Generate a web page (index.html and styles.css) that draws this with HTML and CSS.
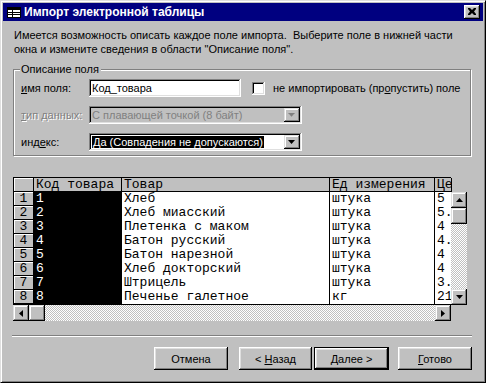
FILE: index.html
```html
<!DOCTYPE html>
<html lang="ru">
<head>
<meta charset="utf-8">
<title>Импорт электронной таблицы</title>
<link rel="stylesheet" href="styles.css">
</head>
<body>
<div class="window">
  <div class="titlebar">
    <svg class="ticon" width="14" height="11" viewBox="0 0 14 11">
      <rect x="0.5" y="0.5" width="13" height="10" fill="#fff" stroke="#000"/>
      <rect x="1" y="1" width="12" height="2" fill="#000"/>
      <line x1="5.5" y1="1" x2="5.5" y2="10" stroke="#000"/>
      <line x1="1" y1="5.5" x2="13" y2="5.5" stroke="#000"/>
      <line x1="1" y1="7.5" x2="13" y2="7.5" stroke="#000"/>
    </svg>
    <span class="ttext">Импорт электронной таблицы</span>
    <div class="close"><svg width="8" height="7" viewBox="0 0 8 7"><path d="M0 0h2l2 2 2-2h2v1l-2 2.5 2 2.5v1h-2l-2-2-2 2h-2v-1l2-2.5-2-2.5z" fill="#000"/></svg></div>
  </div>
  <div class="content">
    <p class="intro">Имеется возможность описать каждое поле импорта.&nbsp; Выберите поле в нижней части<br>окна и измените сведения в области "Описание поля".</p>
    <div class="group">
      <span class="legend">Описание поля</span>
      <div class="frow r1">
        <span class="lbl"><u>и</u>мя поля:</span>
        <div class="edit">Код_товара</div>
        <div class="check"></div>
        <span class="clbl">не импортировать (пр<u>о</u>пустить) поле</span>
      </div>
      <div class="frow r2">
        <span class="lbl dis"><u>т</u>ип данных:</span>
        <div class="combo disabled"><span class="ctext">С плавающей точкой (8 байт)</span><div class="cbtn"><svg width="7" height="5" viewBox="0 0 7 5"><path d="M1 1h5l-2.5 3z" fill="#fff"/><path d="M0 0h7l-3.5 4z" fill="#808080"/></svg></div></div>
      </div>
      <div class="frow r3">
        <span class="lbl">инд<u>е</u>кс:</span>
        <div class="combo"><span class="ctext"><span class="sel">Да (Совпадения не допускаются)</span></span><div class="cbtn"><svg width="7" height="4" viewBox="0 0 7 4"><path d="M0 0h7l-3.5 4z" fill="#000"/></svg></div></div>
      </div>
    </div>

    <div class="grid">
      <div class="gtable">
        <div class="c hd rh"></div><div class="c hd">Код товара</div><div class="c hd">Товар</div><div class="c hd">Ед измерения</div><div class="c hd">Це</div>

        <div class="c rh">1</div><div class="c k">1</div><div class="c">Хлеб</div><div class="c">штука</div><div class="c">5</div>
        <div class="c rh">2</div><div class="c k">2</div><div class="c">Хлеб миасский</div><div class="c">штука</div><div class="c">5.</div>
        <div class="c rh">3</div><div class="c k">3</div><div class="c">Плетенка с маком</div><div class="c">штука</div><div class="c">4</div>
        <div class="c rh">4</div><div class="c k">4</div><div class="c">Батон русский</div><div class="c">штука</div><div class="c">4.</div>
        <div class="c rh">5</div><div class="c k">5</div><div class="c">Батон нарезной</div><div class="c">штука</div><div class="c">4</div>
        <div class="c rh">6</div><div class="c k">6</div><div class="c">Хлеб докторский</div><div class="c">штука</div><div class="c">4</div>
        <div class="c rh">7</div><div class="c k">7</div><div class="c">Штрицель</div><div class="c">штука</div><div class="c">3.</div>
        <div class="c rh">8</div><div class="c k">8</div><div class="c">Печенье галетное</div><div class="c">кг</div><div class="c">21</div>
      </div>
      <div class="vscroll">
        <div class="sbtn"><svg width="7" height="4" viewBox="0 0 7 4"><path d="M3.5 0l3.5 4h-7z" fill="#000"/></svg></div>
        <div class="sthumb"></div>
        <div class="strack"></div>
        <div class="sbtn"><svg width="7" height="4" viewBox="0 0 7 4"><path d="M0 0h7l-3.5 4z" fill="#000"/></svg></div>
      </div>
      <div class="hscroll">
        <div class="sbtn"><svg width="4" height="7" viewBox="0 0 4 7"><path d="M0 3.5l4-3.5v7z" fill="#000"/></svg></div>
        <div class="sthumb"></div>
        <div class="strack"></div>
        <div class="sbtn"><svg width="4" height="7" viewBox="0 0 4 7"><path d="M0 0l4 3.5-4 3.5z" fill="#000"/></svg></div>
      </div>
    </div>

    <div class="sep"></div>
    <div class="buttons">
      <div class="btn"><span>Отмена</span></div>
      <div class="btn b2"><span>&lt; <u>Н</u>азад</span></div>
      <div class="btn def"><span><u>Д</u>алее &gt;</span></div>
      <div class="btn b4"><span><u>Г</u>отово</span></div>
    </div>
  </div>
</div>
</body>
</html>
```

FILE: styles.css
```css
* { box-sizing: border-box; }
html, body { margin: 0; padding: 0; background: #c0c0c0; }
body {
  font-family: "Liberation Sans", Arial, sans-serif;
  font-size: 11px;
  color: #000;
}
u { text-decoration: underline; text-underline-offset: 1px; }

.window {
  width: 486px;
  height: 383px;
  background: #c0c0c0;
  border: 1px solid;
  border-color: #dfdfdf #000 #000 #dfdfdf;
  box-shadow: inset 1px 1px #fff, inset -1px -1px #808080;
  padding: 2px;
  display: flex;
  flex-direction: column;
}

.titlebar {
  height: 18px;
  background: #000080;
  display: flex;
  align-items: center;
  padding: 0 3px 0 4px;
  flex: none;
}
.ticon { display: block; flex: none; }
.ttext {
  color: #fff;
  font-weight: bold;
  font-size: 12px;
  margin-left: 3px;
  flex: 1;
  white-space: nowrap;
}
.close {
  width: 16px;
  height: 14px;
  background: #c0c0c0;
  box-shadow: inset -1px -1px #000, inset 1px 1px #fff, inset -2px -2px #808080, inset 2px 2px #dfdfdf;
  display: flex;
  align-items: center;
  justify-content: center;
  padding: 0 1px 1px 0;
}
.close svg { display: block; }

.content {
  flex: 1;
  display: flex;
  flex-direction: column;
}

.intro {
  margin: 7px 0 0 11px;
  line-height: 14px;
  white-space: nowrap;
}

.group {
  position: relative;
  margin: 13px 0 0 10px;
  width: 458px;
  height: 87px;
  border: 1px solid #808080;
  box-shadow: inset 1px 1px #fff, 1px 1px #fff;
  padding: 9px 0 0 7px;
}
.legend {
  position: absolute;
  left: 6px;
  top: -7px;
  background: #c0c0c0;
  padding: 0 2px 0 1px;
  line-height: 13px;
}
.frow {
  display: flex;
  align-items: center;
  height: 18px;
}
.r2 { margin-top: 9px; }
.r3 { margin-top: 9px; }
.lbl { width: 68px; flex: none; }
.dis { color: #808080; text-shadow: 1px 1px #fff; }

.edit {
  width: 152px;
  height: 18px;
  background: #fff;
  box-shadow: inset -1px -1px #fff, inset 1px 1px #808080, inset -2px -2px #dfdfdf, inset 2px 2px #000;
  padding: 2px 3px 0 3px;
  line-height: 14px;
  white-space: nowrap;
}
.check {
  width: 13px;
  height: 13px;
  margin-left: 11px;
  background: #fff;
  box-shadow: inset -1px -1px #fff, inset 1px 1px #808080, inset -2px -2px #dfdfdf, inset 2px 2px #000;
}
.clbl { margin-left: 8px; white-space: nowrap; }

.combo {
  width: 213px;
  height: 18px;
  background: #fff;
  box-shadow: inset -1px -1px #fff, inset 1px 1px #808080, inset -2px -2px #dfdfdf, inset 2px 2px #000;
  display: flex;
  padding: 2px;
}
.combo.disabled { background: #c0c0c0; color: #808080; }
.ctext {
  flex: 1;
  padding-left: 1px;
  line-height: 14px;
  white-space: nowrap;
  overflow: hidden;
}
.sel { background: #000; color: #fff; padding: 0 1px; }
.cbtn {
  width: 16px;
  height: 14px;
  background: #c0c0c0;
  box-shadow: inset -1px -1px #000, inset 1px 1px #dfdfdf, inset -2px -2px #808080, inset 2px 2px #fff;
  display: flex;
  align-items: center;
  justify-content: center;
  padding-right: 1px;
}
.cbtn svg { display: block; }

/* data grid */
.grid {
  margin: 21px 0 0 10px;
  display: grid;
  grid-template-columns: 438px 16px;
  grid-template-rows: 128px 16px;
  width: 455px;
}
.gtable {
  display: grid;
  grid-template-columns: 20px 88px 208px 105px 17px;
  grid-template-rows: repeat(9, 14px);
  border-top: 1px solid #000;
  border-left: 1px solid #000;
  border-bottom: 1px solid #000;
  font-family: "Liberation Mono", "Courier New", monospace;
  font-size: 13px;
  line-height: 14px;
  height: 128px;
  grid-row: 1 / 2;
}
.c {
  background: #fff;
  border-right: 1px solid #000;
  padding-left: 2px;
  white-space: nowrap;
  overflow: hidden;
}
.c.hd {
  background: #c0c0c0;
  border-bottom: 1px solid #000;
  line-height: 13px;
}
.c.rh {
  background: #c0c0c0;
  border-bottom: 1px solid #000;
  box-shadow: inset 1px 1px #fff;
  text-align: center;
  padding-left: 0;
  line-height: 13px;
}
.c.k { background: #000; color: #fff; }

.vscroll {
  grid-row: 1 / 2;
  margin-top: 15px;
  display: flex;
  flex-direction: column;
}
.hscroll {
  grid-column: 1 / 2;
  display: flex;
}
.sbtn, .sthumb {
  width: 16px;
  height: 16px;
  flex: none;
  background: #c0c0c0;
  box-shadow: inset -1px -1px #000, inset 1px 1px #dfdfdf, inset -2px -2px #808080, inset 2px 2px #fff;
  display: flex;
  align-items: center;
  justify-content: center;
}
.sbtn svg { display: block; }
.strack {
  flex: 1;
  background-color: #c0c0c0;
  background-image: conic-gradient(#fff 25%, #c0c0c0 0 50%, #fff 0 75%, #c0c0c0 0);
  background-size: 2px 2px;
}

.sep {
  margin: 14px 0 0 9px;
  width: 460px;
  height: 2px;
  border-top: 1px solid #808080;
  border-bottom: 1px solid #fff;
}

.buttons {
  display: flex;
  margin: 10px 0 0 151px;
}
.btn {
  width: 74px;
  height: 23px;
  display: flex;
  align-items: center;
  justify-content: center;
  background: #c0c0c0;
  box-shadow: inset -1px -1px #000, inset 1px 1px #fff, inset -2px -2px #808080, inset 2px 2px #dfdfdf;
  white-space: nowrap;
}
.b2 { margin-left: 11px; width: 73px; }
.def {
  margin-left: 2px;
  width: 75px;
  border: 1px solid #000;
}
.b4 { margin-left: 9px; width: 74px; }
```
